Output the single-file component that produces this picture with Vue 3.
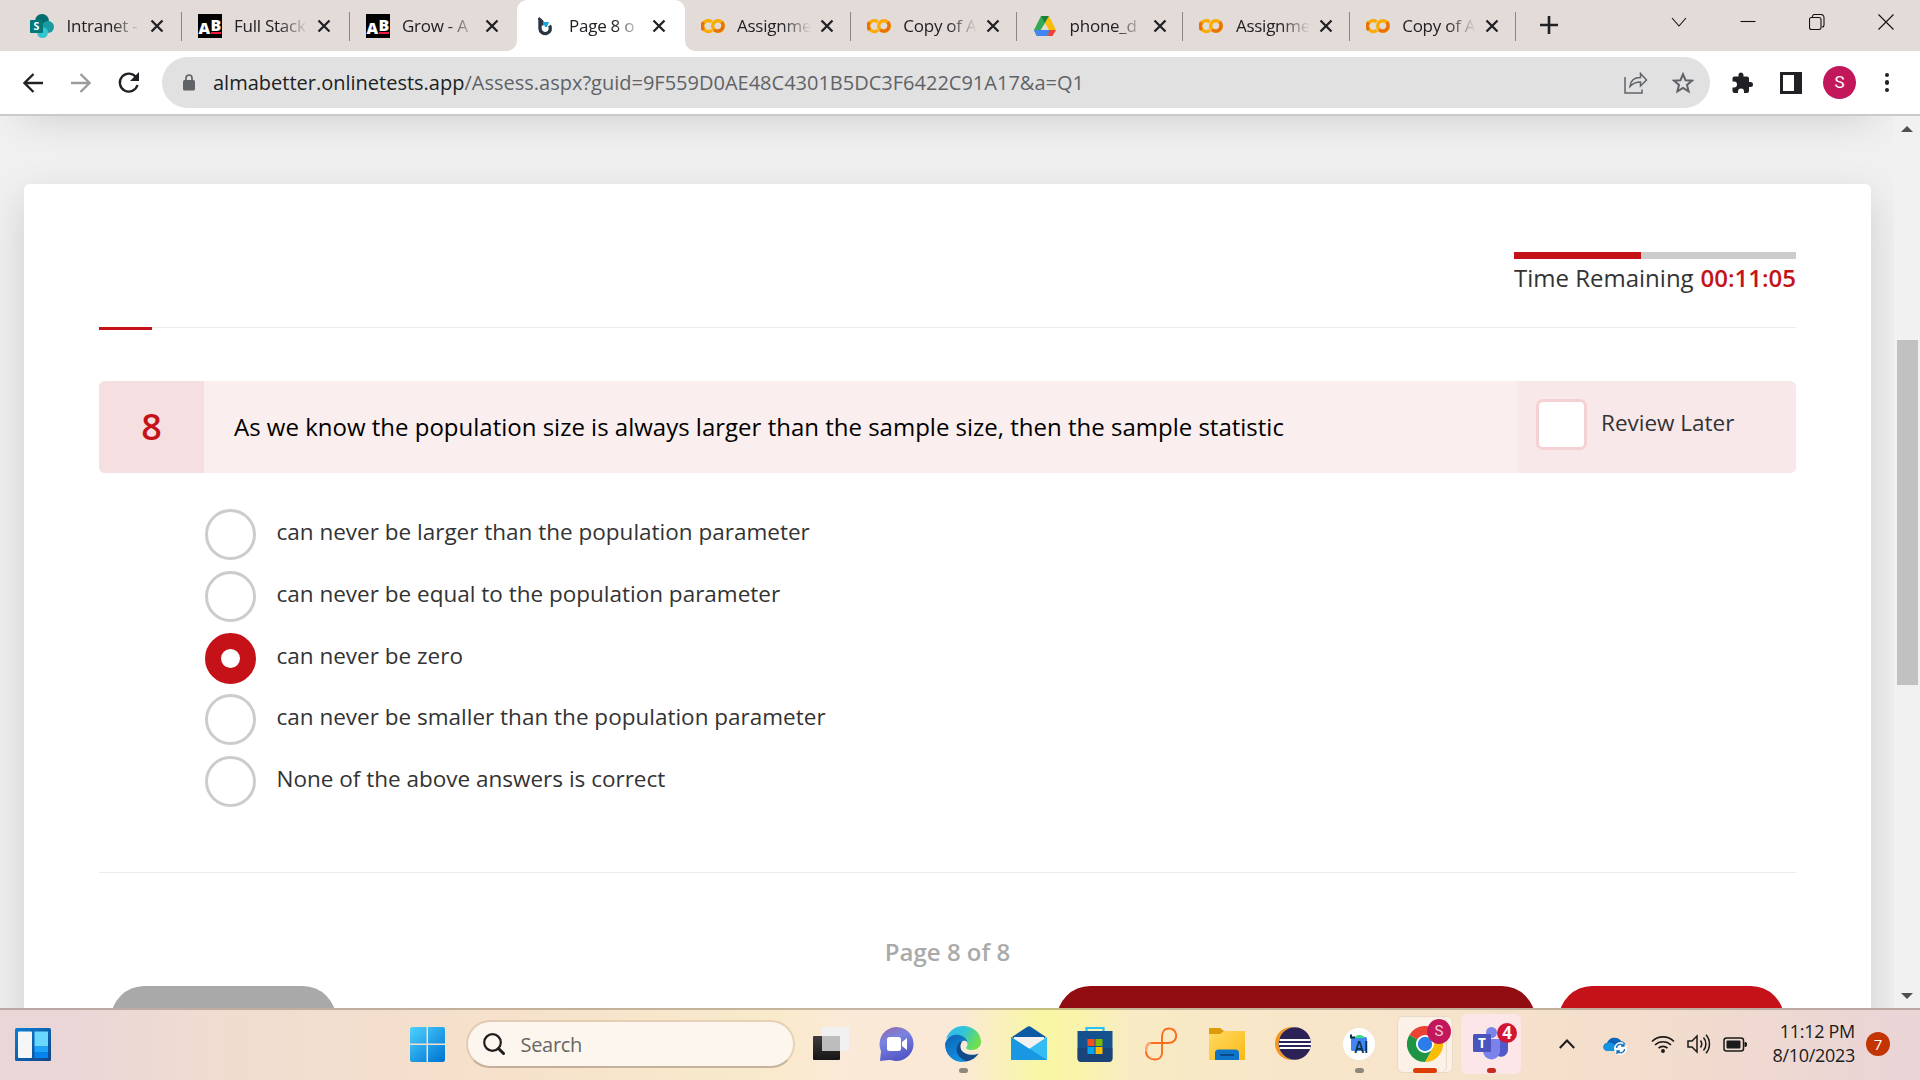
<script setup>
const tabs = [
  { icon: 'sharepoint', title: 'Intranet -', width: 167.5 },
  { icon: 'ab', title: 'Full Stack', width: 168 },
  { icon: 'ab', title: 'Grow - A', width: 167 },
  { icon: 'test', title: 'Page 8 o', width: 168, active: true },
  { icon: 'colab', title: 'Assignme', width: 166.3 },
  { icon: 'colab', title: 'Copy of A', width: 166.3 },
  { icon: 'drive', title: 'phone_d', width: 166.3 },
  { icon: 'colab', title: 'Assignme', width: 166.3 },
  { icon: 'colab', title: 'Copy of A', width: 166.3 },
]

const answers = [
  'can never be larger than the population parameter',
  'can never be equal to the population parameter',
  'can never be zero',
  'can never be smaller than the population parameter',
  'None of the above answers is correct',
]
const selected = 2
const timeUsed = 45
</script>

<template>
  <div class="screen">
    <header class="tabstrip">
      <div class="tabs">
        <div
          v-for="(tab, i) in tabs"
          :key="i"
          class="tab"
          :class="{ active: tab.active, plain: i === 2 }"
          :style="{ width: tab.width + 'px' }"
        >
          <svg v-if="tab.icon === 'sharepoint'" class="favicon" viewBox="0 0 24 24">
            <circle cx="12" cy="7" r="7" fill="#036c70" />
            <circle cx="18" cy="13" r="6" fill="#1a9ba1" />
            <circle cx="12.5" cy="18.5" r="5.500" fill="#37c6d0" />
            <rect x="0" y="6" width="13" height="13" rx="1" fill="#03787c" />
            <text x="6.500" y="16.300" class="glyph" font-size="10.500" font-weight="700">S</text>
          </svg>
          <svg v-else-if="tab.icon === 'ab'" class="favicon" viewBox="0 0 24 24">
            <rect width="24" height="24" fill="#000" />
            <text x="6.200" y="20" class="glyph" font-size="16" font-weight="800">A</text>
            <text x="17.800" y="17" class="glyph" font-size="16" font-weight="800">B</text>
            <rect x="13" y="18" width="10" height="2" fill="#f5193c" />
          </svg>
          <svg v-else-if="tab.icon === 'test'" class="favicon" viewBox="0 0 24 24">
            <path d="M5.500 4l3.800 3.500v4" fill="none" stroke="#2b3643" stroke-width="2.600" />
            <path d="M7 5v9.500a5.200 5.200 0 1 0 9.500-3" fill="none" stroke="#2b3643" stroke-width="3.400" />
            <path d="M10 8h6l-2 5h-2z" fill="#16a5dc" />
          </svg>
          <svg v-else-if="tab.icon === 'colab'" class="favicon" viewBox="0 0 24 24">
            <path d="M10.600 7.800a5.400 5.400 0 1 0 .2 8.400" fill="none" stroke="#f9ab00" stroke-width="3.400" />
            <path d="M2.600 8.400a5.400 5.400 0 0 0 0 7.400" fill="none" stroke="#e8710a" stroke-width="3.400" />
            <circle cx="17" cy="12" r="5.300" fill="none" stroke="#f9ab00" stroke-width="3.400" />
            <path d="M20.800 8.200a5.400 5.400 0 0 1-7.600 7.600" fill="none" stroke="#e8710a" stroke-width="3.400" />
          </svg>
          <svg v-else class="favicon" viewBox="0 0 24 24">
            <path d="M8 2h8l-4 7-5 8-3.500 5L1 16z" fill="#34a853" />
            <path d="M8 2h8l-4 7z" fill="#188038" />
            <path d="M16 2l7 14h-7l-4-7z" fill="#fbbc04" />
            <path d="M1 16h16l-2 6H4z" fill="#4285f4" />
            <path d="M16 16h7l-3.500 6H15z" fill="#ea4335" />
          </svg>
          <span class="title">{{ tab.title }}</span>
          <svg class="close" viewBox="0 0 14 14"><path d="M1.500 1.500l11 11M12.500 1.500l-11 11" /></svg>
        </div>
      </div>
      <svg class="plus" viewBox="0 0 18 18"><path d="M9 0v18M0 9h18" /></svg>
      <div class="window-buttons">
        <svg viewBox="0 0 16 16"><path d="M1 4l7 8 7-8" /></svg>
        <svg viewBox="0 0 16 16"><path d="M0.500 7.500h15" /></svg>
        <svg viewBox="0 0 16 16">
          <rect x=".5" y="3.500" width="11.500" height="12" rx="2" />
          <path d="M3.500 3V2.500a2 2 0 0 1 2-2H12a3 3 0 0 1 3 3V11a2 2 0 0 1-2 2" />
        </svg>
        <svg viewBox="0 0 16 16"><path d="M.5.5l15 15M15.500.5l-15 15" /></svg>
      </div>
    </header>

    <div class="toolbar">
      <svg class="nav back" viewBox="0 0 20 20"><path d="M20 10H2M10.500 1L1.500 10l9 9" /></svg>
      <svg class="nav forward" viewBox="0 0 20 20"><path d="M0 10h18M9.500 1l9 9-9 9" /></svg>
      <svg class="nav reload" viewBox="0 0 22 22">
        <path d="M18.300 5.500A9 9 0 1 0 19.500 13" /><path class="solid" d="M21 0v9h-9z" />
      </svg>
      <div class="omnibox">
        <svg class="lock" viewBox="0 0 12 17">
          <rect y="6" width="12" height="10.500" rx="1.500" fill="#5f6368" />
          <path d="M3 7V4a3 3 0 0 1 6 0v3" fill="none" stroke="#5f6368" stroke-width="1.700" />
        </svg>
        <span class="url"><b>almabetter.onlinetests.app</b>/Assess.aspx?guid=9F559D0AE48C4301B5DC3F6422C91A17&amp;a=Q1</span>
        <svg class="share" viewBox="0 0 24 22">
          <path d="M1 5v16h17v-3.500" />
          <path d="M6 14.500c.5-5.500 4-9 10.500-9V1.500L22.500 8l-6 6v-4C12 10 8.500 11.500 6 14.500z" />
        </svg>
        <svg class="star" viewBox="0 0 22 22">
          <path d="M11 2.200l2.500 6 6.500.5-5 4.200 1.600 6.400L11 15.900l-5.600 3.400L7 12.900 2 8.700l6.500-.5z" />
        </svg>
      </div>
      <svg class="puzzle" viewBox="0 0 22 22">
        <path d="M2.500 4.500h4V3a2.500 2.500 0 0 1 5 0v1.500H15a2 2 0 0 1 2 2V10h1.500a2.500 2.500 0 0 1 0 5H17v4a2 2 0 0 1-2 2h-3v-1.500a3 3 0 0 0-6 0V21H2.500a2 2 0 0 1-2-2v-3.500H2a3 3 0 0 0 0-6H.5v-3a2 2 0 0 1 2-2z" fill="#202124" />
      </svg>
      <svg class="panel" viewBox="0 0 22 22">
        <rect width="22" height="22" fill="#202124" /><rect x="3" y="3" width="11" height="16" fill="#fff" />
      </svg>
      <span class="avatar">S</span>
      <span class="dots"><i></i><i></i><i></i></span>
    </div>

    <div class="viewport">
      <main class="page">
        <div class="previous-card"></div>
        <section class="card">
          <div class="timer">
            <div class="bar"><div class="fill" :style="{ width: timeUsed + '%' }"></div></div>
            <div class="remaining">Time Remaining <strong>00:11:05</strong></div>
          </div>
          <div class="rule accent"></div>
          <div class="question">
            <div class="number">8</div>
            <div class="text">As we know the population size is always larger than the sample size, then the sample statistic</div>
            <div class="review"><span class="checkbox"></span><span class="label">Review Later</span></div>
          </div>
          <ul class="answers">
            <li v-for="(answer, i) in answers" :key="i">
              <span class="radio" :class="{ on: i === selected }"></span>
              <span class="answer">{{ answer }}</span>
            </li>
          </ul>
          <div class="rule"></div>
          <div class="pager">Page 8 of 8</div>
          <div class="buttons"><i class="grey"></i><i class="dark"></i><i class="red"></i></div>
        </section>
      </main>
      <div class="scrollbar">
        <svg viewBox="0 0 12 6"><path d="M0 6L6 0l6 6z" /></svg>
        <div class="thumb"></div>
        <svg viewBox="0 0 12 6"><path d="M0 0h12L6 6z" /></svg>
      </div>
    </div>

    <footer class="taskbar">
      <svg class="widgets" viewBox="0 0 36 33">
        <defs>
          <linearGradient id="wd" x2="1" y2="1"><stop stop-color="#0a7fd6" /><stop offset="1" stop-color="#134486" /></linearGradient>
        </defs>
        <rect width="36" height="33" rx="1.500" fill="url(#wd)" />
        <rect x="3" y="3.500" width="14" height="26.500" rx="1" fill="#f6f6f6" />
        <rect x="19.500" y="3.500" width="13.500" height="15" fill="#69d8ff" />
        <rect x="19.500" y="18.500" width="13.500" height="6" fill="#1ba4fb" />
        <rect x="19.500" y="24.500" width="13.500" height="5.500" fill="#0584ee" />
      </svg>
      <svg class="start" viewBox="0 0 35 35">
        <defs>
          <linearGradient id="wn" gradientUnits="userSpaceOnUse" x1="0" y1="0" x2="30" y2="35"><stop stop-color="#4fd2ff" /><stop offset="1" stop-color="#0078d4" /></linearGradient>
        </defs>
        <path d="M1.500 0H16.500V16.500H0V1.500zM18 0h15.500L35 1.500v15H18zM0 18h16.500v17H1.500L0 33.500zM18 18h17v15.500L33.500 35H18z" fill="url(#wn)" />
      </svg>
      <div class="search">
        <svg viewBox="0 0 22 22"><circle cx="9.500" cy="9.500" r="8.300" /><path d="M15.500 15.500l5 5" stroke-width="3" /></svg>
        <span>Search</span>
      </div>
      <div class="apps">
        <div class="app">
          <svg viewBox="0 0 36 36">
            <defs><linearGradient id="tv" x2="0" y2="1"><stop stop-color="#3d3d3d" /><stop offset="1" stop-color="#151515" /></linearGradient></defs>
            <rect y="10" width="27" height="24" rx="1" fill="url(#tv)" />
            <rect x="9" y="1" width="27" height="24" rx="1" fill="#f1f1f1" />
            <rect x="9" y="10" width="18" height="15" fill="#bdbdbd" />
          </svg>
        </div>
        <div class="app">
          <svg viewBox="0 0 36 36">
            <defs><linearGradient id="ch" x1="0.200" x2="0.600" y2="1"><stop stop-color="#8f6bb0" /><stop offset="0.350" stop-color="#7b83e0" /><stop offset="1" stop-color="#5054c4" /></linearGradient></defs>
            <path d="M1 35l1-10A17 17 0 1 1 18 35c-3 0-6-1.500-8-1z" fill="url(#ch)" />
            <rect x="8" y="11" width="14" height="14" rx="2.500" fill="#fff" />
            <path d="M23 16l5-4v12l-5-4z" fill="#fff" />
          </svg>
        </div>
        <div class="app running">
          <svg viewBox="0 0 36 36">
            <defs>
              <linearGradient id="e1" x2="1" y2="0.400"><stop stop-color="#35b9e9" /><stop offset="0.500" stop-color="#2fc3dd" /><stop offset="1" stop-color="#6ee04e" /></linearGradient>
              <linearGradient id="e2" x2="0.500" y2="1"><stop stop-color="#0d62b5" /><stop offset="1" stop-color="#1290e0" /></linearGradient>
            </defs>
            <path d="M1 13C4 4 11 0 18 0c10 0 18 7 18 15.500 0 5.500-4 8.500-9 8.500-5 0-7-1.500-5-4 .7-1 .6-2.500 0-4C18 8 7 8 1 13z" fill="url(#e1)" />
            <path d="M0 18C2 10 9 8 14 9c5 1 8 4 8.500 7.500C21 14 17 14 15 17c-3 6 0 13 6 18.500C9 38 0 29 0 18z" fill="url(#e2)" />
            <path d="M14 17c-4 5-4 13 7 18.500 6-1 10-4 12.500-8-6 3-19 1-18-8 .1-1.500 1-3 2-4-1.500 0-2.500.5-3.500 1.500z" fill="#114a8b" />
          </svg>
        </div>
        <div class="app">
          <svg viewBox="0 0 36 36">
            <path d="M1 11L16 1q2-1.500 4 0l15 10-17 14z" fill="#0c5aa6" />
            <path d="M3 11h30v4L18 24 3 15z" fill="#f3f1f2" />
            <path d="M0 11l18 12 18-12v23H0z" fill="#35bdf3" />
            <path d="M0 11l36 23H0z" fill="#1997e2" />
          </svg>
        </div>
        <div class="app">
          <svg viewBox="0 0 36 36">
            <path d="M9.500 6V2h17v4" fill="none" stroke="#26c2f8" stroke-width="2.200" />
            <path d="M.5 5h35v27a4 4 0 0 1-4 4h-27a4 4 0 0 1-4-4z" fill="#15508f" />
            <path d="M.5 22h35v10a4 4 0 0 1-4 4h-27a4 4 0 0 1-4-4z" fill="#1d3c6c" opacity=".65" />
            <path d="M10.500 13h7v7h-7z" fill="#f25022" /><path d="M18.500 13h7v7h-7z" fill="#7fba00" />
            <path d="M10.500 21h7v7h-7z" fill="#00a4ef" /><path d="M18.500 21h7v7h-7z" fill="#ffb900" />
          </svg>
        </div>
        <div class="app">
          <svg viewBox="0 0 36 36">
            <path d="M8 17h17c6 0 9-4 8-9-1-4-4-5.500-7-5.500-5 0-7 4-7 8V27c0 4-3 6.500-7 6.500-5 0-9-3-9-8C3 20 5 17 8 17z" fill="none" stroke="#fb6d1d" stroke-width="1.900" />
            <path d="M8 17c-3 0-5 3-5 8.500" fill="none" stroke="#ffa673" stroke-width="1.900" />
          </svg>
        </div>
        <div class="app">
          <svg viewBox="0 0 36 36">
            <defs><linearGradient id="fo" x2="1" y2="1"><stop stop-color="#ffdb64" /><stop offset="1" stop-color="#fcb813" /></linearGradient></defs>
            <path d="M0 3q0-1 1-1h10l4 3h20q1 0 1 1v12H0z" fill="#dd9b0a" />
            <path d="M0 8h11l4-3h21v29H0z" fill="url(#fo)" />
            <path d="M6 34v-7q0-3.500 3.500-3.500h17q3.500 0 3.500 3.500v7z" fill="#0e74c7" />
            <path d="M11 29h14" stroke="#08498a" stroke-width="2" />
          </svg>
        </div>
        <div class="app">
          <svg viewBox="0 0 36 36">
            <circle cx="16.500" cy="17.500" r="16.500" fill="#f7941e" />
            <ellipse cx="20" cy="17.500" rx="16.500" ry="16.500" fill="#fbe7c8" />
            <circle cx="19.800" cy="17.500" r="16.200" fill="#2c2255" />
            <path d="M4.500 14h31M4 18h32M4.500 22h31" stroke="#fff" stroke-width="2" />
          </svg>
        </div>
        <div class="app running">
          <svg viewBox="0 0 36 36">
            <circle cx="18" cy="18" r="16" fill="#fff" />
            <rect x="10" y="11" width="16" height="14" rx="1.500" fill="#4285f4" />
            <path d="M13 12a6 5 0 0 1 11 0z" fill="#3ddc84" />
            <path d="M10 8.500v3h4" stroke="#073042" stroke-width="2" fill="none" />
            <text x="20.500" y="27" class="ai" font-size="17" font-weight="600" textLength="14" lengthAdjust="spacingAndGlyphs">AI</text>
          </svg>
        </div>
        <div class="app chrome running">
          <svg viewBox="0 0 36 36">
            <path d="M18 18L2.400 9A18 18 0 0 1 33.600 9z" fill="#ea4335" />
            <path d="M2.400 9A18 18 0 0 0 18 36l7.800-13.500L18 18z" fill="#1e9445" />
            <path d="M33.600 9H18l7.800 13.500L18 36A18 18 0 0 0 33.600 9z" fill="#fbbc04" />
            <circle cx="18" cy="18" r="9" fill="#fff" /><circle cx="18" cy="18" r="7.200" fill="#2b7de9" />
          </svg>
          <span class="badge s">S</span>
        </div>
        <div class="app teams running">
          <svg viewBox="0 0 36 36">
            <circle cx="18.500" cy="6.500" r="5.500" fill="#7b83eb" />
            <path d="M25 13h10v11a7 7 0 0 1-10 6z" fill="#5059c9" />
            <path d="M10 13h17v12a8.500 8.500 0 0 1-17 0z" fill="#7b83eb" />
            <rect x="0" y="8" width="18" height="18" rx="1.500" fill="#4b53bc" />
            <text x="9" y="21.800" class="glyph" font-size="13.500" font-weight="700">T</text>
          </svg>
          <span class="badge four">4</span>
        </div>
      </div>
      <div class="tray">
        <svg class="up" viewBox="0 0 16 10"><path d="M.8 9L8 1.500 15.200 9" fill="none" stroke="#1b1b1b" stroke-width="2" /></svg>
        <svg class="cloud" viewBox="0 0 24 20">
          <path d="M4 8a8 8 0 0 1 14-2 6 6 0 0 1 5 6c0 3-2 4-4 4H5c-6 0-6-7-1-8z" fill="#0a64b8" />
          <path d="M4 8c3-1 5 0 8 2l7 5v1H5c-6 0-6-7-1-8z" fill="#1493df" />
          <circle cx="17.500" cy="13.500" r="6.500" fill="#fff" />
          <path d="M13.500 13a4 4 0 0 1 7-2.500M21.500 14a4 4 0 0 1-7 2.500M21 8v3h-3M14 19v-3h3" fill="none" stroke="#1570b8" stroke-width="1.300" />
        </svg>
        <svg class="wifi" viewBox="0 0 24 18" fill="none" stroke="#1b1b1b" stroke-width="1.600">
          <path d="M1 6.500a15.500 15.500 0 0 1 22 0M4 10a11.500 11.500 0 0 1 16 0M7.500 13.200a6.500 6.500 0 0 1 9 0" /><circle cx="12" cy="16" r="1.300" fill="#1b1b1b" stroke-width="1.200" />
        </svg>
        <svg class="volume" viewBox="0 0 24 20" fill="none" stroke="#1b1b1b" stroke-width="1.500">
          <path d="M1 7h4l5-5v16l-5-5H1z" /><path d="M13.500 6.500a6 6 0 0 1 0 7M16.500 3.500a10 10 0 0 1 0 13M19 .8a14 14 0 0 1 0 18.400" />
        </svg>
        <svg class="battery" viewBox="0 0 24 15">
          <rect x="1" y="1" width="19.500" height="13" rx="2.500" fill="none" stroke="#1b1b1b" stroke-width="1.500" />
          <rect x="3.500" y="3.500" width="14" height="8" rx="1" fill="#1b1b1b" /><path d="M21.500 5h1l1.500 1v3l-1.500 1h-1z" fill="#1b1b1b" />
        </svg>
        <div class="clock"><span>11:12 PM</span><span>8/10/2023</span></div>
        <span class="notice">7</span>
      </div>
    </footer>
  </div>
</template>

<style>
body { margin: 0; overflow: hidden; }
</style>

<style scoped>
* { box-sizing: border-box; }
.screen {
  width: 1920px;
  height: 1080px;
  display: flex;
  flex-direction: column;
  overflow: hidden;
  font-family: "Open Sans", "Noto Sans", sans-serif;
  color: #202124;
}
svg { display: block; flex: none; }
.glyph { fill: #fff; text-anchor: middle; font-family: "Open Sans", sans-serif; }
.ai { fill: #073042; text-anchor: middle; font-family: "Open Sans", sans-serif; }

/* Tab strip */
.tabstrip { height: 51px; flex: none; background: #e3dbd8; display: flex; }
.tabs { display: flex; margin-left: 14px; width: 1503px; }
.tab {
  flex: none;
  height: 51px;
  padding-left: 16px;
  display: flex;
  align-items: center;
  position: relative;
}
.tab::after {
  content: "";
  position: absolute;
  right: 0;
  top: 12px;
  width: 1px;
  height: 29px;
  background: #8b8785;
}
.tab.plain::after { display: none; }
.tab.active { background: #fff; border-radius: 10px 10px 0 0; }
.tab.active::before, .tab.active::after {
  content: "";
  position: absolute;
  top: auto;
  bottom: 0;
  width: 10px;
  height: 10px;
}
.tab.active::before { left: -10px; background: radial-gradient(circle at 0 0, transparent 9.5px, #fff 10px); }
.tab.active::after { right: -10px; background: radial-gradient(circle at 100% 0, transparent 9.5px, #fff 10px); }
.favicon { width: 24px; height: 24px; }
.title {
  width: 76px;
  margin-left: 12.5px;
  white-space: nowrap;
  font-size: 17px;
  line-height: 26px;
  letter-spacing: -0.25px;
  -webkit-mask-image: linear-gradient(90deg, #000 45px, transparent 74px);
  mask-image: linear-gradient(90deg, #000 45px, transparent 74px);
}
.close { width: 14px; height: 14px; margin-left: 7px; stroke: #202124; stroke-width: 2.3; }
.plus { width: 18px; height: 18px; margin: 16px 0 0 23px; stroke: #202124; stroke-width: 2.6; }
.window-buttons { margin: 14px 26px 0 auto; display: flex; gap: 53px; }
.window-buttons svg { width: 16px; height: 16px; fill: none; stroke: #111; stroke-width: 1.1; }

/* Toolbar */
.toolbar {
  height: 65px;
  flex: none;
  border-bottom: 2px solid #cacaca;
  background: #fff;
  display: flex;
  align-items: center;
}
.nav { width: 20px; height: 20px; fill: none; stroke: #202124; stroke-width: 2.3; }
.back { margin-left: 23px; }
.forward { margin-left: 28px; stroke: #9b9b9b; }
.reload { width: 22px; height: 22px; margin-left: 27px; }
.reload .solid { fill: #202124; stroke: none; }
.omnibox {
  width: 1548px;
  height: 51px;
  margin-left: 22px;
  border-radius: 26px;
  background: #e1e1e1;
  display: flex;
  align-items: center;
}
.lock { width: 12px; height: 17px; margin-left: 21px; }
.url { margin-left: 18px; font-size: 20px; color: #5f6368; white-space: nowrap; }
.url b { font-weight: 400; color: #202124; }
.share { width: 24px; height: 22px; margin-left: auto; fill: none; stroke: #5f6368; stroke-width: 1.5; }
.star { width: 22px; height: 22px; margin: 0 16px 0 24px; fill: none; stroke: #5f6368; stroke-width: 2; }
.puzzle { width: 22px; height: 22px; margin-left: 22px; }
.panel { width: 22px; height: 22px; margin-left: 26px; }
.avatar {
  width: 33px;
  height: 33px;
  margin-left: 21px;
  border-radius: 50%;
  background: #c2185b;
  color: #fff;
  font: 17px/33px Roboto, sans-serif;
  text-align: center;
}
.dots { margin-left: 28.5px; display: flex; flex-direction: column; gap: 3px; }
.dots i { width: 4.5px; height: 4.5px; border-radius: 50%; background: #202124; }

/* Test page */
.viewport { height: 892px; flex: none; display: flex; background: #f0f0f0; }
.page { width: 1894px; height: 892px; overflow: hidden; padding: 0 23px 0 24px; }
.previous-card { height: 68px; }
.previous-card::before {
  content: "";
  display: block;
  height: 60px;
  transform: translateY(-68px);
  box-shadow: 0 8px 40px rgba(0, 0, 0, 0.16);
}
.card {
  height: 900px;
  border-radius: 6px;
  background: #fff;
  box-shadow: 0 14px 40px rgba(0, 0, 0, 0.14);
  padding: 68px 75px 0;
  display: flex;
  flex-direction: column;
}
.timer { width: 282px; height: 75px; align-self: flex-end; flex: none; }
.bar { height: 7px; background: #ccc; }
.fill { height: 7px; background: #c41218; }
.remaining {
  display: flex;
  justify-content: space-between;
  font-size: 24px;
  line-height: 34px;
  color: #333;
  margin-top: 2px;
  white-space: nowrap;
}
.remaining strong { font-weight: 550; color: #c41218; }
.rule { height: 1px; flex: none; background: #ececec; }
.rule.accent::before { content: ""; display: block; width: 53px; height: 3px; background: #c41218; }
.question {
  height: 92px;
  flex: none;
  margin-top: 53px;
  display: flex;
  border-radius: 6px;
  overflow: hidden;
  background: #faeeee;
}
.number {
  width: 105px;
  background: #f6dfe1;
  color: #c41218;
  font-size: 36px;
  font-weight: 600;
  line-height: 92px;
  text-align: center;
}
.text { flex: 1; padding-left: 30px; color: #000; font-size: 24px; line-height: 92px; white-space: nowrap; }
.review { width: 279px; padding: 18px 0 0 19px; display: flex; background: #f8e8e9; }
.checkbox { width: 51px; height: 51px; border: 3px solid #f5d1d3; border-radius: 7px; background: #fff; }
.label { margin-left: 14px; font-size: 22.5px; line-height: 48px; color: #333; }
.answers { margin: 36px 0 0 106px; padding: 0; list-style: none; height: 363px; flex: none; }
.answers li { height: 61.75px; display: flex; }
.radio { width: 51px; height: 51px; border: 3px solid #ccc; border-radius: 50%; }
.radio.on { border: 16px solid #c41218; }
.answer { margin-left: 20.5px; font-size: 22.5px; line-height: 46px; color: #333; white-space: nowrap; }
.pager { height: 113px; flex: none; padding-top: 62px; text-align: center; font-size: 24px; font-weight: 600; line-height: 34px; color: #aaa; }
.buttons { display: flex; padding: 0 12px; }
.buttons i { height: 66px; border-radius: 33px; }
.grey { width: 225px; background: #a9a9a9; }
.dark { width: 478px; margin-left: auto; background: #920d12; }
.red { width: 225px; margin-left: 24px; background: #c41218; }
.scrollbar { width: 26px; background: #f1f1f1; display: flex; flex-direction: column; align-items: center; padding-top: 10px; }
.scrollbar svg { width: 12px; height: 6px; fill: #505050; }
.thumb { width: 21px; height: 345px; margin: 208px 0; background: #c1c1c1; }
.scrollbar svg:last-child { margin-top: 100px; }

/* Taskbar */
.taskbar {
  height: 72px;
  flex: none;
  display: flex;
  align-items: center;
  box-shadow: inset 0 2px rgba(90, 70, 60, 0.32);
  background: linear-gradient(90deg, #ead6d6 0, #ead6d6 80px, #f0dcd0 210px, #f4dfcd 400px, #f6e2cb 520px, #f9eacb 770px, #fbe9d8 850px, #fae9d6 960px, #f8f7a4 1040px, #f9f3ab 1080px, #f8ebc4 1130px, #f8e6c9 1280px, #f7e4cb 1420px, #f3ddcc 1640px, #ead4d6 1900px);
}
.widgets { width: 36px; height: 33px; margin-left: 15px; }
.start { width: 35px; height: 35px; margin-left: 359px; }
.search {
  width: 329px;
  height: 48px;
  margin-left: 20.5px;
  border: 2px solid rgba(170, 130, 100, 0.22);
  border-bottom-color: rgba(120, 100, 80, 0.4);
  border-radius: 24px;
  background: #fcf6ef;
  background-clip: padding-box;
  display: flex;
  align-items: center;
}
.search svg { width: 22px; height: 22px; margin-left: 15px; fill: none; stroke: #1d1d1d; stroke-width: 2.2; stroke-linecap: round; }
.search span { margin-left: 16px; font-size: 20px; color: #666; letter-spacing: -0.3px; }
.apps { margin-left: 3.5px; display: flex; }
.app { width: 66px; height: 72px; display: flex; align-items: center; justify-content: center; position: relative; }
.app svg { width: 36px; height: 36px; position: relative; }
.app.running::after {
  content: "";
  position: absolute;
  left: 28.5px;
  top: 60px;
  width: 9px;
  height: 5px;
  border-radius: 3px;
  background: #8f8778;
}
.app.chrome::before, .app.teams::before { content: ""; position: absolute; border-radius: 6px; }
.app.chrome::before {
  inset: 8px 5px 7px;
  background: #fbf1e6;
  border: 1px solid #e9dac8;
  box-shadow: inset -5px 0 #fbf1e6, inset -6px 0 #e9dac8;
}
.app.teams::before { inset: 6px 3px; background: #fce6e8; }
.app.chrome::after { left: 21px; width: 24px; background: #dc3c05; }
.app.teams::after { background: #c92a1d; }
.badge { position: absolute; border-radius: 50%; color: #fff; text-align: center; }
.badge.s { left: 35px; top: 11px; width: 24px; height: 25px; background: #c2185b; color: #f5c8da; font: 15px/25px Roboto, sans-serif; }
.badge.four { left: 39px; top: 15px; width: 20px; height: 20px; background: #d11535; font-size: 17px; font-weight: 700; line-height: 20px; }
.tray { display: flex; align-items: center; margin-left: 35px; }
.up { width: 16px; height: 10px; }
.cloud { width: 24px; height: 20px; margin-left: 28px; margin-top: 2px; }
.wifi { width: 24px; height: 18px; margin-left: 24px; }
.volume { width: 24px; height: 20px; margin-left: 12px; }
.battery { width: 24px; height: 15px; margin-left: 12px; }
.clock { width: 100px; margin-left: 8px; text-align: right; font-size: 18px; line-height: 24px; color: #1b1b1b; letter-spacing: -0.3px; padding-bottom: 2px; }
.clock span { display: block; }
.notice {
  width: 24px;
  height: 24px;
  margin-left: 11px;
  border-radius: 50%;
  background: #c33403;
  color: #fff;
  font-size: 15px;
  line-height: 24px;
  text-align: center;
}
</style>
